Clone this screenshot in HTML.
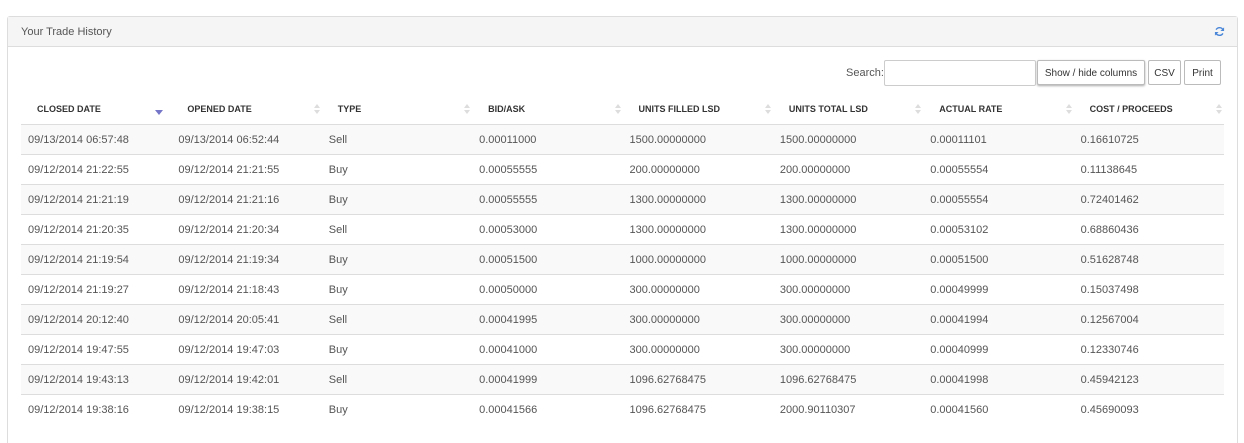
<!DOCTYPE html>
<html style="height:443px;overflow:hidden"><head><meta charset="utf-8"><style>
body{margin:0;background:#fff;font-family:"Liberation Sans",Arial,sans-serif;width:1244px;height:443px;overflow:hidden;position:relative}
.panel{position:absolute;left:7px;top:16px;width:1231px;height:427px;border:1px solid #ddd;border-bottom:none;border-radius:3px 3px 0 0;box-sizing:border-box}
.ph{height:29px;background:#f5f5f5;border-bottom:1px solid #ddd;font-size:11px;color:#555;line-height:30px;padding-left:13px}
.ref{position:absolute;right:12px;top:9px}
.search{position:absolute;top:50px;left:838px;font-size:11px;color:#555}
.inp{position:absolute;top:43px;left:876px;width:152px;height:26px;border:1px solid #ccc;box-sizing:border-box;border-radius:2px}
.btn{position:absolute;top:43px;height:25px;border:1px solid #bbb;border-radius:2px;font-size:10px;color:#333;line-height:25px;text-align:center;box-sizing:border-box;background:#fff}
table{position:absolute;left:13px;top:76px;border-collapse:collapse;width:1203px;font-size:11px;color:#555}
th{height:31px;text-align:left;font-size:9px;font-weight:bold;color:#333;padding:0 0 0 16px;border-bottom:1px solid #ddd;position:relative;width:134px}
td{height:29px;padding:0 0 0 7px;border-bottom:1px solid #ddd}
tr.o td{background:#f9f9f9}
tr:last-child td{border-bottom:none}
.s{position:absolute;right:5px;top:11px;width:0;height:0}
.s:before{content:"";position:absolute;left:-3px;top:0;border:3px solid transparent;border-bottom:4px solid #ddd;border-top:none}
.s:after{content:"";position:absolute;left:-3px;top:6px;border:3px solid transparent;border-top:4px solid #ddd;border-bottom:none}
.d{position:absolute;right:8px;top:17px;border:4px solid transparent;border-top:5px solid #7676c8;border-bottom:none}
</style></head><body>
<div class="panel">
<div class="ph">Your Trade History
<svg class="ref" width="11" height="11" viewBox="0 0 12 12"><path d="M10 4.5A4.3 4.3 0 0 0 2.3 4M2 7.5A4.3 4.3 0 0 0 9.7 8" fill="none" stroke="#4a86d8" stroke-width="1.6"/><path d="M11 1.5v4h-4zM1 10.5v-4h4z" fill="#4a86d8"/></svg></div>
<div class="search">Search:</div>
<div class="inp"></div>
<div class="btn" style="left:1029px;width:108px;box-shadow:0 1px 2px #aaa">Show / hide columns</div>
<div class="btn" style="left:1140px;width:33px">CSV</div>
<div class="btn" style="left:1176px;width:37px">Print</div>
<table>
<tr><th>CLOSED DATE<span class="d"></span></th><th>OPENED DATE<span class="s"></span></th><th>TYPE<span class="s"></span></th><th>BID/ASK<span class="s"></span></th><th>UNITS FILLED LSD<span class="s"></span></th><th>UNITS TOTAL LSD<span class="s"></span></th><th>ACTUAL RATE<span class="s"></span></th><th>COST / PROCEEDS<span class="s"></span></th></tr>
<tr class="o"><td>09/13/2014 06:57:48</td><td>09/13/2014 06:52:44</td><td>Sell</td><td>0.00011000</td><td>1500.00000000</td><td>1500.00000000</td><td>0.00011101</td><td>0.16610725</td></tr>
<tr><td>09/12/2014 21:22:55</td><td>09/12/2014 21:21:55</td><td>Buy</td><td>0.00055555</td><td>200.00000000</td><td>200.00000000</td><td>0.00055554</td><td>0.11138645</td></tr>
<tr class="o"><td>09/12/2014 21:21:19</td><td>09/12/2014 21:21:16</td><td>Buy</td><td>0.00055555</td><td>1300.00000000</td><td>1300.00000000</td><td>0.00055554</td><td>0.72401462</td></tr>
<tr><td>09/12/2014 21:20:35</td><td>09/12/2014 21:20:34</td><td>Sell</td><td>0.00053000</td><td>1300.00000000</td><td>1300.00000000</td><td>0.00053102</td><td>0.68860436</td></tr>
<tr class="o"><td>09/12/2014 21:19:54</td><td>09/12/2014 21:19:34</td><td>Buy</td><td>0.00051500</td><td>1000.00000000</td><td>1000.00000000</td><td>0.00051500</td><td>0.51628748</td></tr>
<tr><td>09/12/2014 21:19:27</td><td>09/12/2014 21:18:43</td><td>Buy</td><td>0.00050000</td><td>300.00000000</td><td>300.00000000</td><td>0.00049999</td><td>0.15037498</td></tr>
<tr class="o"><td>09/12/2014 20:12:40</td><td>09/12/2014 20:05:41</td><td>Sell</td><td>0.00041995</td><td>300.00000000</td><td>300.00000000</td><td>0.00041994</td><td>0.12567004</td></tr>
<tr><td>09/12/2014 19:47:55</td><td>09/12/2014 19:47:03</td><td>Buy</td><td>0.00041000</td><td>300.00000000</td><td>300.00000000</td><td>0.00040999</td><td>0.12330746</td></tr>
<tr class="o"><td>09/12/2014 19:43:13</td><td>09/12/2014 19:42:01</td><td>Sell</td><td>0.00041999</td><td>1096.62768475</td><td>1096.62768475</td><td>0.00041998</td><td>0.45942123</td></tr>
<tr><td>09/12/2014 19:38:16</td><td>09/12/2014 19:38:15</td><td>Buy</td><td>0.00041566</td><td>1096.62768475</td><td>2000.90110307</td><td>0.00041560</td><td>0.45690093</td></tr>
</table>
</div>
</body></html>
